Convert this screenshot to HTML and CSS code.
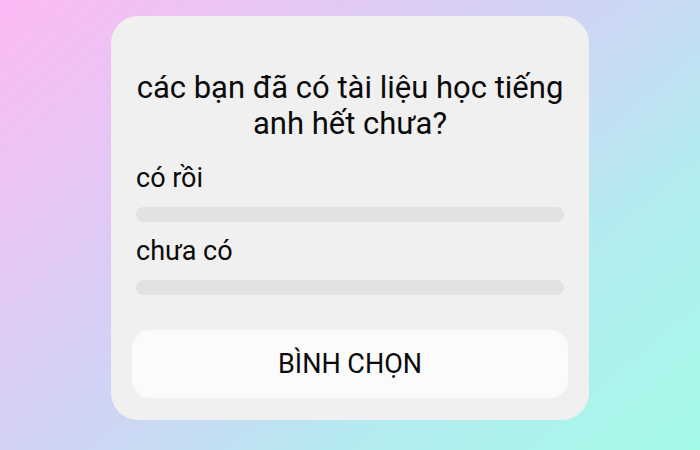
FILE: index.html
```html
<!DOCTYPE html>
<html lang="vi">
<head>
<meta charset="utf-8">
<title>Bình chọn</title>
<link rel="stylesheet" href="styles.css">
</head>
<body>
  <div class="card">
    <h1 class="question">các bạn đã có tài liệu học tiếng anh hết chưa?</h1>
    <div class="options">
      <div class="option">
        <div class="label">có rồi</div>
        <div class="bar"></div>
      </div>
      <div class="option">
        <div class="label">chưa có</div>
        <div class="bar"></div>
      </div>
    </div>
    <button class="vote">BÌNH CHỌN</button>
  </div>
</body>
</html>
```

FILE: styles.css
```css
html, body {
  margin: 0;
  padding: 0;
}
body {
  width: 700px;
  height: 450px;
  overflow: hidden;
  font-family: Roboto, "Noto Sans", sans-serif;
  background: linear-gradient(140deg, #fdbaf5 0%, #d3d1f4 43%, #c6dcf3 57%, #b5eaf0 70%, #a4fbe8 100%);
}
.card {
  box-sizing: border-box;
  width: 478px;
  margin: 16px auto 0;
  padding: 54px 21px 22px;
  background: #f0f0f0;
  border-radius: 27px;
  display: flex;
  flex-direction: column;
}
.question {
  margin: 0 4px;
  font-size: 31px;
  line-height: 36px;
  font-weight: 400;
  color: #0a0a0a;
  text-align: center;
}
.options {
  margin: 20px 4px 0;
  display: flex;
  flex-direction: column;
  gap: 13px;
}
.option {
  display: flex;
  flex-direction: column;
  gap: 13px;
}
.label {
  font-size: 27px;
  line-height: 32px;
  color: #0a0a0a;
}
.bar {
  height: 15px;
  border-radius: 8px;
  background: #e2e2e2;
}
.vote {
  margin-top: 35px;
  height: 68px;
  border: none;
  border-radius: 18px;
  background: #fbfbfb;
  font-family: Roboto, "Noto Sans", sans-serif;
  font-size: 27px;
  color: #0a0a0a;
  padding: 0;
}
```
